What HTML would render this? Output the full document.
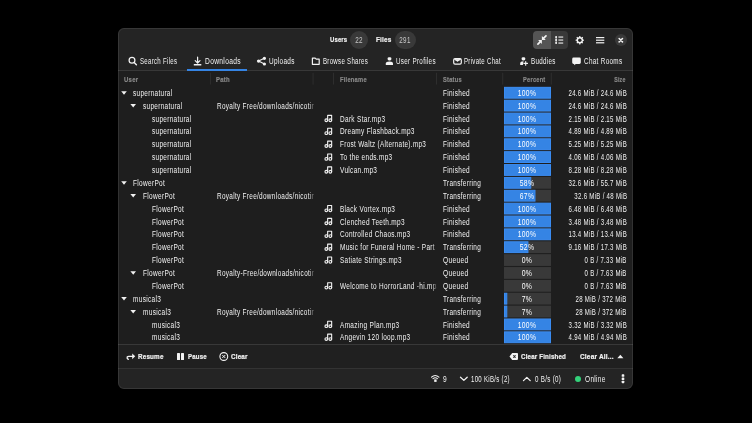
<!DOCTYPE html>
<html><head><meta charset="utf-8"><style>
html,body{margin:0;padding:0;width:752px;height:423px;overflow:hidden;background:#000;}
body{position:relative;font-family:"Liberation Sans",sans-serif;}
.win{position:absolute;left:118px;top:28px;width:515px;height:361px;border-radius:6px;background:#242424;}
.winb{position:absolute;left:118px;top:28px;width:513px;height:359px;border-radius:6px;border:1px solid rgba(255,255,255,0.09);}
.view{position:absolute;left:118px;top:71px;width:515px;height:273px;background:#1e1e1e;}
.abar{position:absolute;left:118px;top:345px;width:515px;height:23px;background:#202020;}
.hsep{position:absolute;left:118px;width:515px;height:1px;background:#383838;}
.t{position:absolute;white-space:nowrap;line-height:10px;}
.vs{position:absolute;top:73px;width:1px;height:12px;background:#2e2e2e;}
.bar{position:absolute;left:504px;width:47px;height:12px;background:#393939;overflow:hidden;}
.fill{position:absolute;left:0;top:0;height:12px;background:#3584e4;}
.badge{position:absolute;top:31px;height:18px;border-radius:9px;background:#393939;}
</style></head><body>
<div class="win"></div>
<div class="view"></div>
<div class="abar"></div>
<div class="hsep" style="top:70px"></div>
<div class="hsep" style="top:344px"></div>
<div class="hsep" style="top:368px;background:#333"></div>
<div class="winb"></div>
<div class="badge" style="left:350px;width:17.5px"></div>
<div class="badge" style="left:394.5px;width:21px"></div>
<div style="position:absolute;left:533.4px;top:31px;width:17.6px;height:18px;background:#555;border-radius:4px 0 0 4px"></div>
<div style="position:absolute;left:551px;top:31px;width:16.6px;height:18px;background:#393939;border-radius:0 4px 4px 0"></div>
<div style="position:absolute;left:614.6px;top:33.9px;width:12.4px;height:12.4px;background:#393939;border-radius:50%"></div>
<div style="position:absolute;left:187.2px;top:69px;width:59.7px;height:2px;background:#3584e4"></div>
<svg style="position:absolute;left:0;top:0" width="752" height="423"><rect x="210.1" y="72.8" width="1" height="11.8" fill="#2e2e2e"/><rect x="312.6" y="72.8" width="1" height="11.8" fill="#2e2e2e"/><rect x="333.0" y="72.8" width="1" height="11.8" fill="#2e2e2e"/><rect x="436.0" y="72.8" width="1" height="11.8" fill="#2e2e2e"/><rect x="502.2" y="72.8" width="1" height="11.8" fill="#2e2e2e"/><rect x="550.8" y="72.8" width="1" height="11.8" fill="#2e2e2e"/></svg>
<svg style="position:absolute;left:0;top:0" width="752" height="423"><rect x="504" y="86.85" width="47" height="11.8" fill="#393939"/><rect x="504.5" y="87.35" width="46.00" height="10.8" fill="#3584e4" stroke="#3a8cf2" stroke-width="1"/><rect x="504" y="99.72" width="47" height="11.8" fill="#393939"/><rect x="504.5" y="100.22" width="46.00" height="10.8" fill="#3584e4" stroke="#3a8cf2" stroke-width="1"/><rect x="504" y="112.59" width="47" height="11.8" fill="#393939"/><rect x="504.5" y="113.09" width="46.00" height="10.8" fill="#3584e4" stroke="#3a8cf2" stroke-width="1"/><rect x="504" y="125.46" width="47" height="11.8" fill="#393939"/><rect x="504.5" y="125.96" width="46.00" height="10.8" fill="#3584e4" stroke="#3a8cf2" stroke-width="1"/><rect x="504" y="138.33" width="47" height="11.8" fill="#393939"/><rect x="504.5" y="138.83" width="46.00" height="10.8" fill="#3584e4" stroke="#3a8cf2" stroke-width="1"/><rect x="504" y="151.20" width="47" height="11.8" fill="#393939"/><rect x="504.5" y="151.70" width="46.00" height="10.8" fill="#3584e4" stroke="#3a8cf2" stroke-width="1"/><rect x="504" y="164.07" width="47" height="11.8" fill="#393939"/><rect x="504.5" y="164.57" width="46.00" height="10.8" fill="#3584e4" stroke="#3a8cf2" stroke-width="1"/><rect x="504" y="176.94" width="47" height="11.8" fill="#393939"/><rect x="504.5" y="177.44" width="26.26" height="10.8" fill="#3584e4" stroke="#3a8cf2" stroke-width="1"/><rect x="504" y="189.81" width="47" height="11.8" fill="#393939"/><rect x="504.5" y="190.31" width="30.49" height="10.8" fill="#3584e4" stroke="#3a8cf2" stroke-width="1"/><rect x="504" y="202.68" width="47" height="11.8" fill="#393939"/><rect x="504.5" y="203.18" width="46.00" height="10.8" fill="#3584e4" stroke="#3a8cf2" stroke-width="1"/><rect x="504" y="215.55" width="47" height="11.8" fill="#393939"/><rect x="504.5" y="216.05" width="46.00" height="10.8" fill="#3584e4" stroke="#3a8cf2" stroke-width="1"/><rect x="504" y="228.42" width="47" height="11.8" fill="#393939"/><rect x="504.5" y="228.92" width="46.00" height="10.8" fill="#3584e4" stroke="#3a8cf2" stroke-width="1"/><rect x="504" y="241.29" width="47" height="11.8" fill="#393939"/><rect x="504.5" y="241.79" width="23.44" height="10.8" fill="#3584e4" stroke="#3a8cf2" stroke-width="1"/><rect x="504" y="254.16" width="47" height="11.8" fill="#393939"/><rect x="504" y="267.03" width="47" height="11.8" fill="#393939"/><rect x="504" y="279.90" width="47" height="11.8" fill="#393939"/><rect x="504" y="292.77" width="47" height="11.8" fill="#393939"/><rect x="504.5" y="293.27" width="2.29" height="10.8" fill="#3584e4" stroke="#3a8cf2" stroke-width="1"/><rect x="504" y="305.64" width="47" height="11.8" fill="#393939"/><rect x="504.5" y="306.14" width="2.29" height="10.8" fill="#3584e4" stroke="#3a8cf2" stroke-width="1"/><rect x="504" y="318.51" width="47" height="11.8" fill="#393939"/><rect x="504.5" y="319.01" width="46.00" height="10.8" fill="#3584e4" stroke="#3a8cf2" stroke-width="1"/><rect x="504" y="331.38" width="47" height="11.8" fill="#393939"/><rect x="504.5" y="331.88" width="46.00" height="10.8" fill="#3584e4" stroke="#3a8cf2" stroke-width="1"/></svg>
<div style="position:absolute;left:575.4px;top:376px;width:6px;height:6px;border-radius:50%;background:#33d17a"></div>
<svg style="position:absolute;left:0;top:0" width="752" height="423"><circle cx="132" cy="60.3" r="2.9" fill="none" stroke="#f2f2f2" stroke-width="1.25" stroke-linecap="round" stroke-linejoin="round"/><path d="M134.2 62.5L136.4 64.8" fill="none" stroke="#f2f2f2" stroke-width="1.4" stroke-linecap="round" stroke-linejoin="round"/><path d="M197.6 57.2V62.6M195.2 60.6L197.6 63L200 60.6" fill="none" stroke="#f2f2f2" stroke-width="1.2" stroke-linecap="round" stroke-linejoin="round"/><rect x="193.8" y="64" width="7.5" height="1.5" fill="#f2f2f2"/><g fill="#f2f2f2"><circle cx="258.6" cy="61.1" r="1.7"/><circle cx="264.4" cy="58.3" r="1.6"/><circle cx="264.4" cy="64" r="1.6"/></g><path d="M258.6 61.1L264.4 58.3M258.6 61.1L264.4 64" fill="none" stroke="#f2f2f2" stroke-width="1.1" stroke-linecap="round" stroke-linejoin="round"/><path d="M312.4 58.2H315.2L316.2 59.2H319.2V64.3H312.4Z" fill="none" stroke="#f2f2f2" stroke-width="1.2" stroke-linecap="round" stroke-linejoin="round"/><g fill="#f2f2f2"><rect x="387.6" y="57.2" width="3.8" height="3.3" rx="1.4"/><path d="M385.8 64.9V63.6Q385.8 61.4 389.5 61.4Q393 61.4 393 63.6V64.9Z"/></g><rect x="453.7" y="58.7" width="7.6" height="5.4" rx="1.3" fill="none" stroke="#f2f2f2" stroke-width="1.2" stroke-linecap="round" stroke-linejoin="round"/><path d="M454.6 59.4L457.5 61.3L460.4 59.4V59Z" fill="#f2f2f2" stroke="#f2f2f2" stroke-width="1"/><g fill="#f2f2f2"><rect x="521.6" y="57.2" width="3.7" height="3.2" rx="1.4"/><path d="M520.2 65V63.4Q520.2 61.4 523.5 61.3L522.9 65Z"/></g><path d="M525.7 61.6V65.2M523.9 63.4H527.5" fill="none" stroke="#f2f2f2" stroke-width="1.1" stroke-linecap="round" stroke-linejoin="round"/><path d="M573.6 57.6H579.4Q580.8 57.6 580.8 59V62.5Q580.8 63.9 579.4 63.9H575.8L574.2 65.2V63.9H573.6Q572.2 63.9 572.2 62.5V59Q572.2 57.6 573.6 57.6Z" fill="#f2f2f2"/><path d="M541.9 36.1V39.9H545.7Z" fill="#f2f2f2"/><path d="M543.4 38.4L546 35.8" fill="none" stroke="#f2f2f2" stroke-width="1.7" stroke-linecap="round" stroke-linejoin="round"/><path d="M538.1 40.1H541.9V43.9Z" fill="#f2f2f2"/><path d="M540.4 41.6L537.9 44.1" fill="none" stroke="#f2f2f2" stroke-width="1.7" stroke-linecap="round" stroke-linejoin="round"/><g fill="#f2f2f2"><circle cx="556.1" cy="37.1" r="1.0"/><circle cx="556.1" cy="40.1" r="1.0"/><circle cx="556.1" cy="43.1" r="1.0"/><rect x="555.7" y="37" width="0.8" height="6"/><rect x="558.4" y="36.5" width="4.8" height="1.1"/><rect x="558.4" y="39.5" width="4.8" height="1.1"/><rect x="558.4" y="42.5" width="4.8" height="1.1"/></g><path d="M583.03 39.54L584.01 39.65L584.01 40.75L583.03 40.86L582.85 41.46L582.55 42.02L583.17 42.79L582.39 43.57L581.62 42.95L581.06 43.25L580.46 43.43L580.35 44.41L579.25 44.41L579.14 43.43L578.54 43.25L577.98 42.95L577.21 43.57L576.43 42.79L577.05 42.02L576.75 41.46L576.57 40.86L575.59 40.75L575.59 39.65L576.57 39.54L576.75 38.94L577.05 38.38L576.43 37.61L577.21 36.83L577.98 37.45L578.54 37.15L579.14 36.97L579.25 35.99L580.35 35.99L580.46 36.97L581.06 37.15L581.62 37.45L582.39 36.83L583.17 37.61L582.55 38.38L582.85 38.94Z" fill="#f2f2f2"/><circle cx="579.8" cy="40.2" r="1.75" fill="#242424"/><g fill="#f2f2f2"><rect x="596" y="37" width="8.3" height="1.2"/><rect x="596" y="39.6" width="8.3" height="1.2"/><rect x="596" y="42.2" width="8.3" height="1.2"/></g><path d="M619.1 38.5L622.5 41.9M622.5 38.5L619.1 41.9" fill="none" stroke="#f2f2f2" stroke-width="1.5" stroke-linecap="round" stroke-linejoin="round"/><path d="M128.3 359.4Q126.6 358.2 127.2 357Q127.7 356.3 128.8 356.3H133" fill="none" stroke="#f2f2f2" stroke-width="1.3" stroke-linecap="round" stroke-linejoin="round"/><path d="M132.2 353.4L135.2 356.3L132.2 359.2Z" fill="#f2f2f2"/><g fill="#f2f2f2"><rect x="177" y="353" width="3" height="7" rx="0.5"/><rect x="181" y="353" width="3" height="7" rx="0.5"/></g><circle cx="223.8" cy="356.5" r="3.9" fill="none" stroke="#f2f2f2" stroke-width="1.1" stroke-linecap="round" stroke-linejoin="round"/><path d="M222.6 355.3L225 357.7M225 355.3L222.6 357.7" fill="none" stroke="#f2f2f2" stroke-width="1" stroke-linecap="round" stroke-linejoin="round"/><path d="M512.2 353H517.2Q518 353 518 353.8V359.1Q518 359.9 517.2 359.9H512.2L509.5 356.45Z" fill="#f2f2f2"/><path d="M513.3 355.3L515.6 357.6M515.6 355.3L513.3 357.6" stroke="#202020" stroke-width="1.1"/><path d="M617.3 358.2L620.35 354.8L623.4 358.2Z" fill="#f2f2f2"/><path d="M431.5 377.2Q435.2 373.8 438.9 377.2M433 378.7Q435.2 376.8 437.4 378.7" fill="none" stroke="#f2f2f2" stroke-width="1.1" stroke-linecap="round" stroke-linejoin="round"/><rect x="434.2" y="379.4" width="2.4" height="2.5" fill="#f2f2f2"/><path d="M460.5 377.2L463.85 380.4L467.2 377.2" fill="none" stroke="#f2f2f2" stroke-width="1.3" stroke-linecap="round" stroke-linejoin="round"/><path d="M523.5 380.6L526.85 377.4L530.2 380.6" fill="none" stroke="#f2f2f2" stroke-width="1.3" stroke-linecap="round" stroke-linejoin="round"/><g fill="#f2f2f2"><rect x="621.7" y="374.3" width="2.6" height="2.5" rx="0.6"/><rect x="621.7" y="377.5" width="2.6" height="2.5" rx="0.6"/><rect x="621.7" y="380.7" width="2.6" height="2.5" rx="0.6"/></g><path d="M121.2 91.13000000000001H126.8L124.0 94.63000000000001Z" fill="#f2f2f2"/><path d="M130.4 104.01H136.0L133.20000000000002 107.51Z" fill="#f2f2f2"/><g fill="none" stroke="#f2f2f2" stroke-width="1.1" stroke-linecap="round" stroke-linejoin="round"><circle cx="326.3" cy="120.27" r="1.35"/><circle cx="330.3" cy="120.27" r="1.35"/><path d="M327.65 120.37V115.37H331.65V120.37"/></g><g fill="none" stroke="#f2f2f2" stroke-width="1.1" stroke-linecap="round" stroke-linejoin="round"><circle cx="326.3" cy="133.14000000000001" r="1.35"/><circle cx="330.3" cy="133.14000000000001" r="1.35"/><path d="M327.65 133.24V128.24H331.65V133.24"/></g><g fill="none" stroke="#f2f2f2" stroke-width="1.1" stroke-linecap="round" stroke-linejoin="round"><circle cx="326.3" cy="146.02" r="1.35"/><circle cx="330.3" cy="146.02" r="1.35"/><path d="M327.65 146.12V141.12H331.65V146.12"/></g><g fill="none" stroke="#f2f2f2" stroke-width="1.1" stroke-linecap="round" stroke-linejoin="round"><circle cx="326.3" cy="158.88000000000002" r="1.35"/><circle cx="330.3" cy="158.88000000000002" r="1.35"/><path d="M327.65 158.98000000000002V153.98000000000002H331.65V158.98000000000002"/></g><g fill="none" stroke="#f2f2f2" stroke-width="1.1" stroke-linecap="round" stroke-linejoin="round"><circle cx="326.3" cy="171.75" r="1.35"/><circle cx="330.3" cy="171.75" r="1.35"/><path d="M327.65 171.85V166.85H331.65V171.85"/></g><path d="M121.2 181.22H126.8L124.0 184.72Z" fill="#f2f2f2"/><path d="M130.4 194.09H136.0L133.20000000000002 197.59Z" fill="#f2f2f2"/><g fill="none" stroke="#f2f2f2" stroke-width="1.1" stroke-linecap="round" stroke-linejoin="round"><circle cx="326.3" cy="210.36" r="1.35"/><circle cx="330.3" cy="210.36" r="1.35"/><path d="M327.65 210.46V205.46H331.65V210.46"/></g><g fill="none" stroke="#f2f2f2" stroke-width="1.1" stroke-linecap="round" stroke-linejoin="round"><circle cx="326.3" cy="223.24" r="1.35"/><circle cx="330.3" cy="223.24" r="1.35"/><path d="M327.65 223.34V218.34H331.65V223.34"/></g><g fill="none" stroke="#f2f2f2" stroke-width="1.1" stroke-linecap="round" stroke-linejoin="round"><circle cx="326.3" cy="236.11" r="1.35"/><circle cx="330.3" cy="236.11" r="1.35"/><path d="M327.65 236.21V231.21H331.65V236.21"/></g><g fill="none" stroke="#f2f2f2" stroke-width="1.1" stroke-linecap="round" stroke-linejoin="round"><circle cx="326.3" cy="248.98000000000002" r="1.35"/><circle cx="330.3" cy="248.98000000000002" r="1.35"/><path d="M327.65 249.08V244.08H331.65V249.08"/></g><g fill="none" stroke="#f2f2f2" stroke-width="1.1" stroke-linecap="round" stroke-linejoin="round"><circle cx="326.3" cy="261.85" r="1.35"/><circle cx="330.3" cy="261.85" r="1.35"/><path d="M327.65 261.95V256.95H331.65V261.95"/></g><path d="M130.4 271.31H136.0L133.20000000000002 274.81Z" fill="#f2f2f2"/><g fill="none" stroke="#f2f2f2" stroke-width="1.1" stroke-linecap="round" stroke-linejoin="round"><circle cx="326.3" cy="287.58" r="1.35"/><circle cx="330.3" cy="287.58" r="1.35"/><path d="M327.65 287.67999999999995V282.67999999999995H331.65V287.67999999999995"/></g><path d="M121.2 297.04999999999995H126.8L124.0 300.54999999999995Z" fill="#f2f2f2"/><path d="M130.4 309.91999999999996H136.0L133.20000000000002 313.41999999999996Z" fill="#f2f2f2"/><g fill="none" stroke="#f2f2f2" stroke-width="1.1" stroke-linecap="round" stroke-linejoin="round"><circle cx="326.3" cy="326.19" r="1.35"/><circle cx="330.3" cy="326.19" r="1.35"/><path d="M327.65 326.28999999999996V321.28999999999996H331.65V326.28999999999996"/></g><g fill="none" stroke="#f2f2f2" stroke-width="1.1" stroke-linecap="round" stroke-linejoin="round"><circle cx="326.3" cy="339.06" r="1.35"/><circle cx="330.3" cy="339.06" r="1.35"/><path d="M327.65 339.15999999999997V334.15999999999997H331.65V339.15999999999997"/></g></svg>
<div style="position:absolute;left:0;top:0;width:752px;height:423px;will-change:transform">
<div class="t" style="font-size:8.0px;color:#f2f2f2;letter-spacing:0.2px;font-weight:bold;-webkit-text-stroke:0.2px currentColor;left:329.5px;top:40.00px;transform-origin:0 0;transform:translateY(-4.9439999999999955px) scaleX(0.7419);">Users</div>
<div class="t" style="font-size:8.0px;color:#f2f2f2;letter-spacing:0.2px;font-weight:bold;-webkit-text-stroke:0.2px currentColor;left:376px;top:40.00px;transform-origin:0 0;transform:translateY(-4.9439999999999955px) scaleX(0.8018);">Files</div>
<div class="t" style="font-size:8.3px;color:#c8c8c8;letter-spacing:0.4px;left:258.7px;width:200px;text-align:center;top:40.00px;transform-origin:50% 0;transform:translateY(-5.343149999999994px) scaleX(0.7634);">22</div>
<div class="t" style="font-size:8.3px;color:#c8c8c8;letter-spacing:0.4px;left:305.0px;width:200px;text-align:center;top:40.00px;transform-origin:50% 0;transform:translateY(-5.343149999999994px) scaleX(0.7529);">291</div>
<div class="t" style="font-size:8.3px;color:#f2f2f2;letter-spacing:0.4px;left:139.6px;top:61.40px;transform-origin:0 0;transform:translateY(-4.543150000000004px) scaleX(0.7327);">Search Files</div>
<div class="t" style="font-size:8.3px;color:#f2f2f2;letter-spacing:0.4px;left:204.5px;top:61.40px;transform-origin:0 0;transform:translateY(-4.543150000000004px) scaleX(0.8050);">Downloads</div>
<div class="t" style="font-size:8.3px;color:#f2f2f2;letter-spacing:0.4px;left:268.7px;top:61.40px;transform-origin:0 0;transform:translateY(-4.543150000000004px) scaleX(0.7739);">Uploads</div>
<div class="t" style="font-size:8.3px;color:#f2f2f2;letter-spacing:0.4px;left:323px;top:61.40px;transform-origin:0 0;transform:translateY(-4.543150000000004px) scaleX(0.7339);">Browse Shares</div>
<div class="t" style="font-size:8.3px;color:#f2f2f2;letter-spacing:0.4px;left:396.4px;top:61.40px;transform-origin:0 0;transform:translateY(-4.543150000000004px) scaleX(0.7557);">User Profiles</div>
<div class="t" style="font-size:8.3px;color:#f2f2f2;letter-spacing:0.4px;left:464.4px;top:61.40px;transform-origin:0 0;transform:translateY(-4.543150000000004px) scaleX(0.7330);">Private Chat</div>
<div class="t" style="font-size:8.3px;color:#f2f2f2;letter-spacing:0.4px;left:530.6px;top:61.40px;transform-origin:0 0;transform:translateY(-4.543150000000004px) scaleX(0.7507);">Buddies</div>
<div class="t" style="font-size:8.3px;color:#f2f2f2;letter-spacing:0.4px;left:583.8px;top:61.40px;transform-origin:0 0;transform:translateY(-4.543150000000004px) scaleX(0.7667);">Chat Rooms</div>
<div class="t" style="font-size:7.2px;color:#888888;letter-spacing:0.3px;font-weight:bold;-webkit-text-stroke:0.2px currentColor;left:124px;top:79.20px;transform-origin:0 0;transform:translateY(-4.1795999999999935px) scaleX(0.8311);">User</div>
<div class="t" style="font-size:7.2px;color:#888888;letter-spacing:0.3px;font-weight:bold;-webkit-text-stroke:0.2px currentColor;left:216.3px;top:79.20px;transform-origin:0 0;transform:translateY(-4.1795999999999935px) scaleX(0.8269);">Path</div>
<div class="t" style="font-size:7.2px;color:#888888;letter-spacing:0.3px;font-weight:bold;-webkit-text-stroke:0.2px currentColor;left:339.8px;top:79.20px;transform-origin:0 0;transform:translateY(-4.1795999999999935px) scaleX(0.7998);">Filename</div>
<div class="t" style="font-size:7.2px;color:#888888;letter-spacing:0.3px;font-weight:bold;-webkit-text-stroke:0.2px currentColor;left:442.5px;top:79.20px;transform-origin:0 0;transform:translateY(-4.1795999999999935px) scaleX(0.7925);">Status</div>
<div class="t" style="font-size:7.2px;color:#888888;letter-spacing:0.3px;font-weight:bold;-webkit-text-stroke:0.2px currentColor;right:206.5px;top:79.20px;transform-origin:100% 0;transform:translateY(-4.1795999999999935px) scaleX(0.7854);">Percent</div>
<div class="t" style="font-size:7.2px;color:#888888;letter-spacing:0.3px;font-weight:bold;-webkit-text-stroke:0.2px currentColor;right:126.20000000000005px;top:79.20px;transform-origin:100% 0;transform:translateY(-4.1795999999999935px) scaleX(0.7328);">Size</div>
<div class="t" style="font-size:8.3px;color:#f2f2f2;letter-spacing:0.4px;left:133.2px;top:92.73px;transform-origin:0 0;transform:translateY(-4.543149999999997px) scaleX(0.7757);">supernatural</div>
<div class="t" style="font-size:8.3px;color:#f2f2f2;letter-spacing:0.4px;left:442.6px;top:92.73px;transform-origin:0 0;transform:translateY(-4.543149999999997px) scaleX(0.7806);">Finished</div>
<div class="t" style="font-size:8.3px;color:#ffffff;letter-spacing:0.4px;left:427.4px;width:200px;text-align:center;top:92.73px;transform-origin:50% 0;transform:translateY(-4.543149999999997px) scaleX(0.8120);">100%</div>
<div class="t" style="font-size:8.3px;color:#f2f2f2;letter-spacing:0.4px;right:125.20000000000005px;top:92.73px;transform-origin:100% 0;transform:translateY(-4.543149999999997px) scaleX(0.7313);">24.6 MiB / 24.6 MiB</div>
<div class="t" style="font-size:8.3px;color:#f2f2f2;letter-spacing:0.4px;left:142.5px;top:105.61px;transform-origin:0 0;transform:translateY(-4.543149999999997px) scaleX(0.7757);">supernatural</div>
<div class="t" style="font-size:8.3px;color:#f2f2f2;letter-spacing:0.4px;left:216.6px;top:105.61px;transform-origin:0 0;transform:translateY(-4.543149999999997px) scaleX(0.7724);width:125.6px;overflow:hidden;-webkit-mask-image:linear-gradient(to right,#000 94.8%,rgba(0,0,0,0.15) 100%);">Royalty Free/downloads/nicotine</div>
<div class="t" style="font-size:8.3px;color:#f2f2f2;letter-spacing:0.4px;left:442.6px;top:105.61px;transform-origin:0 0;transform:translateY(-4.543149999999997px) scaleX(0.7806);">Finished</div>
<div class="t" style="font-size:8.3px;color:#ffffff;letter-spacing:0.4px;left:427.4px;width:200px;text-align:center;top:105.61px;transform-origin:50% 0;transform:translateY(-4.543149999999997px) scaleX(0.8120);">100%</div>
<div class="t" style="font-size:8.3px;color:#f2f2f2;letter-spacing:0.4px;right:125.20000000000005px;top:105.61px;transform-origin:100% 0;transform:translateY(-4.543149999999997px) scaleX(0.7313);">24.6 MiB / 24.6 MiB</div>
<div class="t" style="font-size:8.3px;color:#f2f2f2;letter-spacing:0.4px;left:151.79999999999998px;top:118.47px;transform-origin:0 0;transform:translateY(-3.543149999999997px) scaleX(0.7757);">supernatural</div>
<div class="t" style="font-size:8.3px;color:#f2f2f2;letter-spacing:0.4px;left:339.9px;top:118.47px;transform-origin:0 0;transform:translateY(-3.543149999999997px) scaleX(0.7794);width:124.5px;overflow:hidden;-webkit-mask-image:linear-gradient(to right,#000 94.8%,rgba(0,0,0,0.15) 100%);">Dark Star.mp3</div>
<div class="t" style="font-size:8.3px;color:#f2f2f2;letter-spacing:0.4px;left:442.6px;top:118.47px;transform-origin:0 0;transform:translateY(-3.543149999999997px) scaleX(0.7806);">Finished</div>
<div class="t" style="font-size:8.3px;color:#ffffff;letter-spacing:0.4px;left:427.4px;width:200px;text-align:center;top:118.47px;transform-origin:50% 0;transform:translateY(-3.543149999999997px) scaleX(0.8120);">100%</div>
<div class="t" style="font-size:8.3px;color:#f2f2f2;letter-spacing:0.4px;right:125.20000000000005px;top:118.47px;transform-origin:100% 0;transform:translateY(-3.543149999999997px) scaleX(0.7313);">2.15 MiB / 2.15 MiB</div>
<div class="t" style="font-size:8.3px;color:#f2f2f2;letter-spacing:0.4px;left:151.79999999999998px;top:131.34px;transform-origin:0 0;transform:translateY(-4.543150000000011px) scaleX(0.7757);">supernatural</div>
<div class="t" style="font-size:8.3px;color:#f2f2f2;letter-spacing:0.4px;left:339.9px;top:131.34px;transform-origin:0 0;transform:translateY(-4.543150000000011px) scaleX(0.7819);width:124.1px;overflow:hidden;-webkit-mask-image:linear-gradient(to right,#000 94.8%,rgba(0,0,0,0.15) 100%);">Dreamy Flashback.mp3</div>
<div class="t" style="font-size:8.3px;color:#f2f2f2;letter-spacing:0.4px;left:442.6px;top:131.34px;transform-origin:0 0;transform:translateY(-4.543150000000011px) scaleX(0.7806);">Finished</div>
<div class="t" style="font-size:8.3px;color:#ffffff;letter-spacing:0.4px;left:427.4px;width:200px;text-align:center;top:131.34px;transform-origin:50% 0;transform:translateY(-4.543150000000011px) scaleX(0.8120);">100%</div>
<div class="t" style="font-size:8.3px;color:#f2f2f2;letter-spacing:0.4px;right:125.20000000000005px;top:131.34px;transform-origin:100% 0;transform:translateY(-4.543150000000011px) scaleX(0.7313);">4.89 MiB / 4.89 MiB</div>
<div class="t" style="font-size:8.3px;color:#f2f2f2;letter-spacing:0.4px;left:151.79999999999998px;top:144.22px;transform-origin:0 0;transform:translateY(-4.543149999999997px) scaleX(0.7757);">supernatural</div>
<div class="t" style="font-size:8.3px;color:#f2f2f2;letter-spacing:0.4px;left:339.9px;top:144.22px;transform-origin:0 0;transform:translateY(-4.543149999999997px) scaleX(0.7705);width:125.9px;overflow:hidden;-webkit-mask-image:linear-gradient(to right,#000 94.8%,rgba(0,0,0,0.15) 100%);">Frost Waltz (Alternate).mp3</div>
<div class="t" style="font-size:8.3px;color:#f2f2f2;letter-spacing:0.4px;left:442.6px;top:144.22px;transform-origin:0 0;transform:translateY(-4.543149999999997px) scaleX(0.7806);">Finished</div>
<div class="t" style="font-size:8.3px;color:#ffffff;letter-spacing:0.4px;left:427.4px;width:200px;text-align:center;top:144.22px;transform-origin:50% 0;transform:translateY(-4.543149999999997px) scaleX(0.8120);">100%</div>
<div class="t" style="font-size:8.3px;color:#f2f2f2;letter-spacing:0.4px;right:125.20000000000005px;top:144.22px;transform-origin:100% 0;transform:translateY(-4.543149999999997px) scaleX(0.7313);">5.25 MiB / 5.25 MiB</div>
<div class="t" style="font-size:8.3px;color:#f2f2f2;letter-spacing:0.4px;left:151.79999999999998px;top:157.08px;transform-origin:0 0;transform:translateY(-4.543150000000026px) scaleX(0.7757);">supernatural</div>
<div class="t" style="font-size:8.3px;color:#f2f2f2;letter-spacing:0.4px;left:339.9px;top:157.08px;transform-origin:0 0;transform:translateY(-4.543150000000026px) scaleX(0.7787);width:124.6px;overflow:hidden;-webkit-mask-image:linear-gradient(to right,#000 94.8%,rgba(0,0,0,0.15) 100%);">To the ends.mp3</div>
<div class="t" style="font-size:8.3px;color:#f2f2f2;letter-spacing:0.4px;left:442.6px;top:157.08px;transform-origin:0 0;transform:translateY(-4.543150000000026px) scaleX(0.7806);">Finished</div>
<div class="t" style="font-size:8.3px;color:#ffffff;letter-spacing:0.4px;left:427.4px;width:200px;text-align:center;top:157.08px;transform-origin:50% 0;transform:translateY(-4.543150000000026px) scaleX(0.8120);">100%</div>
<div class="t" style="font-size:8.3px;color:#f2f2f2;letter-spacing:0.4px;right:125.20000000000005px;top:157.08px;transform-origin:100% 0;transform:translateY(-4.543150000000026px) scaleX(0.7313);">4.06 MiB / 4.06 MiB</div>
<div class="t" style="font-size:8.3px;color:#f2f2f2;letter-spacing:0.4px;left:151.79999999999998px;top:169.95px;transform-origin:0 0;transform:translateY(-4.543150000000026px) scaleX(0.7757);">supernatural</div>
<div class="t" style="font-size:8.3px;color:#f2f2f2;letter-spacing:0.4px;left:339.9px;top:169.95px;transform-origin:0 0;transform:translateY(-4.543150000000026px) scaleX(0.7850);width:123.6px;overflow:hidden;-webkit-mask-image:linear-gradient(to right,#000 94.8%,rgba(0,0,0,0.15) 100%);">Vulcan.mp3</div>
<div class="t" style="font-size:8.3px;color:#f2f2f2;letter-spacing:0.4px;left:442.6px;top:169.95px;transform-origin:0 0;transform:translateY(-4.543150000000026px) scaleX(0.7806);">Finished</div>
<div class="t" style="font-size:8.3px;color:#ffffff;letter-spacing:0.4px;left:427.4px;width:200px;text-align:center;top:169.95px;transform-origin:50% 0;transform:translateY(-4.543150000000026px) scaleX(0.8120);">100%</div>
<div class="t" style="font-size:8.3px;color:#f2f2f2;letter-spacing:0.4px;right:125.20000000000005px;top:169.95px;transform-origin:100% 0;transform:translateY(-4.543150000000026px) scaleX(0.7313);">8.28 MiB / 8.28 MiB</div>
<div class="t" style="font-size:8.3px;color:#f2f2f2;letter-spacing:0.4px;left:133.2px;top:182.82px;transform-origin:0 0;transform:translateY(-4.543150000000026px) scaleX(0.7835);">FlowerPot</div>
<div class="t" style="font-size:8.3px;color:#f2f2f2;letter-spacing:0.4px;left:442.6px;top:182.82px;transform-origin:0 0;transform:translateY(-4.543150000000026px) scaleX(0.7734);">Transferring</div>
<div class="t" style="font-size:8.3px;color:#ffffff;letter-spacing:0.4px;left:427.4px;width:200px;text-align:center;top:182.82px;transform-origin:50% 0;transform:translateY(-4.543150000000026px) scaleX(0.8186);">58%</div>
<div class="t" style="font-size:8.3px;color:#f2f2f2;letter-spacing:0.4px;right:125.20000000000005px;top:182.82px;transform-origin:100% 0;transform:translateY(-4.543150000000026px) scaleX(0.7313);">32.6 MiB / 55.7 MiB</div>
<div class="t" style="font-size:8.3px;color:#f2f2f2;letter-spacing:0.4px;left:142.5px;top:195.69px;transform-origin:0 0;transform:translateY(-4.543150000000026px) scaleX(0.7835);">FlowerPot</div>
<div class="t" style="font-size:8.3px;color:#f2f2f2;letter-spacing:0.4px;left:216.6px;top:195.69px;transform-origin:0 0;transform:translateY(-4.543150000000026px) scaleX(0.7724);width:125.6px;overflow:hidden;-webkit-mask-image:linear-gradient(to right,#000 94.8%,rgba(0,0,0,0.15) 100%);">Royalty Free/downloads/nicotine</div>
<div class="t" style="font-size:8.3px;color:#f2f2f2;letter-spacing:0.4px;left:442.6px;top:195.69px;transform-origin:0 0;transform:translateY(-4.543150000000026px) scaleX(0.7734);">Transferring</div>
<div class="t" style="font-size:8.3px;color:#ffffff;letter-spacing:0.4px;left:427.4px;width:200px;text-align:center;top:195.69px;transform-origin:50% 0;transform:translateY(-4.543150000000026px) scaleX(0.8186);">67%</div>
<div class="t" style="font-size:8.3px;color:#f2f2f2;letter-spacing:0.4px;right:125.20000000000005px;top:195.69px;transform-origin:100% 0;transform:translateY(-4.543150000000026px) scaleX(0.7325);">32.6 MiB / 48 MiB</div>
<div class="t" style="font-size:8.3px;color:#f2f2f2;letter-spacing:0.4px;left:151.79999999999998px;top:208.56px;transform-origin:0 0;transform:translateY(-4.543150000000026px) scaleX(0.7835);">FlowerPot</div>
<div class="t" style="font-size:8.3px;color:#f2f2f2;letter-spacing:0.4px;left:339.9px;top:208.56px;transform-origin:0 0;transform:translateY(-4.543150000000026px) scaleX(0.7776);width:124.7px;overflow:hidden;-webkit-mask-image:linear-gradient(to right,#000 94.8%,rgba(0,0,0,0.15) 100%);">Black Vortex.mp3</div>
<div class="t" style="font-size:8.3px;color:#f2f2f2;letter-spacing:0.4px;left:442.6px;top:208.56px;transform-origin:0 0;transform:translateY(-4.543150000000026px) scaleX(0.7806);">Finished</div>
<div class="t" style="font-size:8.3px;color:#ffffff;letter-spacing:0.4px;left:427.4px;width:200px;text-align:center;top:208.56px;transform-origin:50% 0;transform:translateY(-4.543150000000026px) scaleX(0.8120);">100%</div>
<div class="t" style="font-size:8.3px;color:#f2f2f2;letter-spacing:0.4px;right:125.20000000000005px;top:208.56px;transform-origin:100% 0;transform:translateY(-4.543150000000026px) scaleX(0.7313);">6.48 MiB / 6.48 MiB</div>
<div class="t" style="font-size:8.3px;color:#f2f2f2;letter-spacing:0.4px;left:151.79999999999998px;top:221.44px;transform-origin:0 0;transform:translateY(-3.5431500000000256px) scaleX(0.7835);">FlowerPot</div>
<div class="t" style="font-size:8.3px;color:#f2f2f2;letter-spacing:0.4px;left:339.9px;top:221.44px;transform-origin:0 0;transform:translateY(-3.5431500000000256px) scaleX(0.7800);width:124.4px;overflow:hidden;-webkit-mask-image:linear-gradient(to right,#000 94.8%,rgba(0,0,0,0.15) 100%);">Clenched Teeth.mp3</div>
<div class="t" style="font-size:8.3px;color:#f2f2f2;letter-spacing:0.4px;left:442.6px;top:221.44px;transform-origin:0 0;transform:translateY(-3.5431500000000256px) scaleX(0.7806);">Finished</div>
<div class="t" style="font-size:8.3px;color:#ffffff;letter-spacing:0.4px;left:427.4px;width:200px;text-align:center;top:221.44px;transform-origin:50% 0;transform:translateY(-3.5431500000000256px) scaleX(0.8120);">100%</div>
<div class="t" style="font-size:8.3px;color:#f2f2f2;letter-spacing:0.4px;right:125.20000000000005px;top:221.44px;transform-origin:100% 0;transform:translateY(-3.5431500000000256px) scaleX(0.7313);">3.48 MiB / 3.48 MiB</div>
<div class="t" style="font-size:8.3px;color:#f2f2f2;letter-spacing:0.4px;left:151.79999999999998px;top:234.31px;transform-origin:0 0;transform:translateY(-4.543150000000026px) scaleX(0.7835);">FlowerPot</div>
<div class="t" style="font-size:8.3px;color:#f2f2f2;letter-spacing:0.4px;left:339.9px;top:234.31px;transform-origin:0 0;transform:translateY(-4.543150000000026px) scaleX(0.7781);width:124.7px;overflow:hidden;-webkit-mask-image:linear-gradient(to right,#000 94.8%,rgba(0,0,0,0.15) 100%);">Controlled Chaos.mp3</div>
<div class="t" style="font-size:8.3px;color:#f2f2f2;letter-spacing:0.4px;left:442.6px;top:234.31px;transform-origin:0 0;transform:translateY(-4.543150000000026px) scaleX(0.7806);">Finished</div>
<div class="t" style="font-size:8.3px;color:#ffffff;letter-spacing:0.4px;left:427.4px;width:200px;text-align:center;top:234.31px;transform-origin:50% 0;transform:translateY(-4.543150000000026px) scaleX(0.8120);">100%</div>
<div class="t" style="font-size:8.3px;color:#f2f2f2;letter-spacing:0.4px;right:125.20000000000005px;top:234.31px;transform-origin:100% 0;transform:translateY(-4.543150000000026px) scaleX(0.7313);">13.4 MiB / 13.4 MiB</div>
<div class="t" style="font-size:8.3px;color:#f2f2f2;letter-spacing:0.4px;left:151.79999999999998px;top:247.18px;transform-origin:0 0;transform:translateY(-4.543150000000026px) scaleX(0.7835);">FlowerPot</div>
<div class="t" style="font-size:8.3px;color:#f2f2f2;letter-spacing:0.4px;left:339.9px;top:247.18px;transform-origin:0 0;transform:translateY(-4.543150000000026px) scaleX(0.7726);width:125.5px;overflow:hidden;-webkit-mask-image:linear-gradient(to right,#000 94.8%,rgba(0,0,0,0.15) 100%);">Music for Funeral Home - Part 1.mp3</div>
<div class="t" style="font-size:8.3px;color:#f2f2f2;letter-spacing:0.4px;left:442.6px;top:247.18px;transform-origin:0 0;transform:translateY(-4.543150000000026px) scaleX(0.7734);">Transferring</div>
<div class="t" style="font-size:8.3px;color:#ffffff;letter-spacing:0.4px;left:427.4px;width:200px;text-align:center;top:247.18px;transform-origin:50% 0;transform:translateY(-4.543150000000026px) scaleX(0.8186);">52%</div>
<div class="t" style="font-size:8.3px;color:#f2f2f2;letter-spacing:0.4px;right:125.20000000000005px;top:247.18px;transform-origin:100% 0;transform:translateY(-4.543150000000026px) scaleX(0.7313);">9.16 MiB / 17.3 MiB</div>
<div class="t" style="font-size:8.3px;color:#f2f2f2;letter-spacing:0.4px;left:151.79999999999998px;top:260.05px;transform-origin:0 0;transform:translateY(-4.543150000000026px) scaleX(0.7835);">FlowerPot</div>
<div class="t" style="font-size:8.3px;color:#f2f2f2;letter-spacing:0.4px;left:339.9px;top:260.05px;transform-origin:0 0;transform:translateY(-4.543150000000026px) scaleX(0.7729);width:125.5px;overflow:hidden;-webkit-mask-image:linear-gradient(to right,#000 94.8%,rgba(0,0,0,0.15) 100%);">Satiate Strings.mp3</div>
<div class="t" style="font-size:8.3px;color:#f2f2f2;letter-spacing:0.4px;left:442.6px;top:260.05px;transform-origin:0 0;transform:translateY(-4.543150000000026px) scaleX(0.7962);">Queued</div>
<div class="t" style="font-size:8.3px;color:#ffffff;letter-spacing:0.4px;left:427.4px;width:200px;text-align:center;top:260.05px;transform-origin:50% 0;transform:translateY(-4.543150000000026px) scaleX(0.8303);">0%</div>
<div class="t" style="font-size:8.3px;color:#f2f2f2;letter-spacing:0.4px;right:125.20000000000005px;top:260.05px;transform-origin:100% 0;transform:translateY(-4.543150000000026px) scaleX(0.7313);">0 B / 7.33 MiB</div>
<div class="t" style="font-size:8.3px;color:#f2f2f2;letter-spacing:0.4px;left:142.5px;top:272.91px;transform-origin:0 0;transform:translateY(-4.543150000000026px) scaleX(0.7835);">FlowerPot</div>
<div class="t" style="font-size:8.3px;color:#f2f2f2;letter-spacing:0.4px;left:216.6px;top:272.91px;transform-origin:0 0;transform:translateY(-4.543150000000026px) scaleX(0.7726);width:125.5px;overflow:hidden;-webkit-mask-image:linear-gradient(to right,#000 94.8%,rgba(0,0,0,0.15) 100%);">Royalty-Free/downloads/nicotine</div>
<div class="t" style="font-size:8.3px;color:#f2f2f2;letter-spacing:0.4px;left:442.6px;top:272.91px;transform-origin:0 0;transform:translateY(-4.543150000000026px) scaleX(0.7962);">Queued</div>
<div class="t" style="font-size:8.3px;color:#ffffff;letter-spacing:0.4px;left:427.4px;width:200px;text-align:center;top:272.91px;transform-origin:50% 0;transform:translateY(-4.543150000000026px) scaleX(0.8303);">0%</div>
<div class="t" style="font-size:8.3px;color:#f2f2f2;letter-spacing:0.4px;right:125.20000000000005px;top:272.91px;transform-origin:100% 0;transform:translateY(-4.543150000000026px) scaleX(0.7313);">0 B / 7.63 MiB</div>
<div class="t" style="font-size:8.3px;color:#f2f2f2;letter-spacing:0.4px;left:151.79999999999998px;top:285.78px;transform-origin:0 0;transform:translateY(-4.543150000000026px) scaleX(0.7835);">FlowerPot</div>
<div class="t" style="font-size:8.3px;color:#f2f2f2;letter-spacing:0.4px;left:339.9px;top:285.78px;transform-origin:0 0;transform:translateY(-4.543150000000026px) scaleX(0.7759);width:125.0px;overflow:hidden;-webkit-mask-image:linear-gradient(to right,#000 94.8%,rgba(0,0,0,0.15) 100%);">Welcome to HorrorLand -hi.mp3</div>
<div class="t" style="font-size:8.3px;color:#f2f2f2;letter-spacing:0.4px;left:442.6px;top:285.78px;transform-origin:0 0;transform:translateY(-4.543150000000026px) scaleX(0.7962);">Queued</div>
<div class="t" style="font-size:8.3px;color:#ffffff;letter-spacing:0.4px;left:427.4px;width:200px;text-align:center;top:285.78px;transform-origin:50% 0;transform:translateY(-4.543150000000026px) scaleX(0.8303);">0%</div>
<div class="t" style="font-size:8.3px;color:#f2f2f2;letter-spacing:0.4px;right:125.20000000000005px;top:285.78px;transform-origin:100% 0;transform:translateY(-4.543150000000026px) scaleX(0.7313);">0 B / 7.63 MiB</div>
<div class="t" style="font-size:8.3px;color:#f2f2f2;letter-spacing:0.4px;left:133.2px;top:298.65px;transform-origin:0 0;transform:translateY(-4.543150000000026px) scaleX(0.7832);">musical3</div>
<div class="t" style="font-size:8.3px;color:#f2f2f2;letter-spacing:0.4px;left:442.6px;top:298.65px;transform-origin:0 0;transform:translateY(-4.543150000000026px) scaleX(0.7734);">Transferring</div>
<div class="t" style="font-size:8.3px;color:#ffffff;letter-spacing:0.4px;left:427.4px;width:200px;text-align:center;top:298.65px;transform-origin:50% 0;transform:translateY(-4.543150000000026px) scaleX(0.8303);">7%</div>
<div class="t" style="font-size:8.3px;color:#f2f2f2;letter-spacing:0.4px;right:125.20000000000005px;top:298.65px;transform-origin:100% 0;transform:translateY(-4.543150000000026px) scaleX(0.7344);">28 MiB / 372 MiB</div>
<div class="t" style="font-size:8.3px;color:#f2f2f2;letter-spacing:0.4px;left:142.5px;top:311.52px;transform-origin:0 0;transform:translateY(-4.543150000000026px) scaleX(0.7832);">musical3</div>
<div class="t" style="font-size:8.3px;color:#f2f2f2;letter-spacing:0.4px;left:216.6px;top:311.52px;transform-origin:0 0;transform:translateY(-4.543150000000026px) scaleX(0.7724);width:125.6px;overflow:hidden;-webkit-mask-image:linear-gradient(to right,#000 94.8%,rgba(0,0,0,0.15) 100%);">Royalty Free/downloads/nicotine</div>
<div class="t" style="font-size:8.3px;color:#f2f2f2;letter-spacing:0.4px;left:442.6px;top:311.52px;transform-origin:0 0;transform:translateY(-4.543150000000026px) scaleX(0.7734);">Transferring</div>
<div class="t" style="font-size:8.3px;color:#ffffff;letter-spacing:0.4px;left:427.4px;width:200px;text-align:center;top:311.52px;transform-origin:50% 0;transform:translateY(-4.543150000000026px) scaleX(0.8303);">7%</div>
<div class="t" style="font-size:8.3px;color:#f2f2f2;letter-spacing:0.4px;right:125.20000000000005px;top:311.52px;transform-origin:100% 0;transform:translateY(-4.543150000000026px) scaleX(0.7344);">28 MiB / 372 MiB</div>
<div class="t" style="font-size:8.3px;color:#f2f2f2;letter-spacing:0.4px;left:151.79999999999998px;top:324.39px;transform-origin:0 0;transform:translateY(-3.5431500000000256px) scaleX(0.7832);">musical3</div>
<div class="t" style="font-size:8.3px;color:#f2f2f2;letter-spacing:0.4px;left:339.9px;top:324.39px;transform-origin:0 0;transform:translateY(-3.5431500000000256px) scaleX(0.7824);width:124.0px;overflow:hidden;-webkit-mask-image:linear-gradient(to right,#000 94.8%,rgba(0,0,0,0.15) 100%);">Amazing Plan.mp3</div>
<div class="t" style="font-size:8.3px;color:#f2f2f2;letter-spacing:0.4px;left:442.6px;top:324.39px;transform-origin:0 0;transform:translateY(-3.5431500000000256px) scaleX(0.7806);">Finished</div>
<div class="t" style="font-size:8.3px;color:#ffffff;letter-spacing:0.4px;left:427.4px;width:200px;text-align:center;top:324.39px;transform-origin:50% 0;transform:translateY(-3.5431500000000256px) scaleX(0.8120);">100%</div>
<div class="t" style="font-size:8.3px;color:#f2f2f2;letter-spacing:0.4px;right:125.20000000000005px;top:324.39px;transform-origin:100% 0;transform:translateY(-3.5431500000000256px) scaleX(0.7313);">3.32 MiB / 3.32 MiB</div>
<div class="t" style="font-size:8.3px;color:#f2f2f2;letter-spacing:0.4px;left:151.79999999999998px;top:337.26px;transform-origin:0 0;transform:translateY(-4.543150000000026px) scaleX(0.7832);">musical3</div>
<div class="t" style="font-size:8.3px;color:#f2f2f2;letter-spacing:0.4px;left:339.9px;top:337.26px;transform-origin:0 0;transform:translateY(-4.543150000000026px) scaleX(0.7781);width:124.7px;overflow:hidden;-webkit-mask-image:linear-gradient(to right,#000 94.8%,rgba(0,0,0,0.15) 100%);">Angevin 120 loop.mp3</div>
<div class="t" style="font-size:8.3px;color:#f2f2f2;letter-spacing:0.4px;left:442.6px;top:337.26px;transform-origin:0 0;transform:translateY(-4.543150000000026px) scaleX(0.7806);">Finished</div>
<div class="t" style="font-size:8.3px;color:#ffffff;letter-spacing:0.4px;left:427.4px;width:200px;text-align:center;top:337.26px;transform-origin:50% 0;transform:translateY(-4.543150000000026px) scaleX(0.8120);">100%</div>
<div class="t" style="font-size:8.3px;color:#f2f2f2;letter-spacing:0.4px;right:125.20000000000005px;top:337.26px;transform-origin:100% 0;transform:translateY(-4.543150000000026px) scaleX(0.7313);">4.94 MiB / 4.94 MiB</div>
<div class="t" style="font-size:7.4px;color:#f2f2f2;letter-spacing:0.2px;font-weight:bold;-webkit-text-stroke:0.2px currentColor;left:137.8px;top:356.80px;transform-origin:0 0;transform:translateY(-4.745699999999999px) scaleX(0.8535);">Resume</div>
<div class="t" style="font-size:7.4px;color:#f2f2f2;letter-spacing:0.2px;font-weight:bold;-webkit-text-stroke:0.2px currentColor;left:187.8px;top:356.80px;transform-origin:0 0;transform:translateY(-4.745699999999999px) scaleX(0.8235);">Pause</div>
<div class="t" style="font-size:7.4px;color:#f2f2f2;letter-spacing:0.2px;font-weight:bold;-webkit-text-stroke:0.2px currentColor;left:230.8px;top:356.80px;transform-origin:0 0;transform:translateY(-4.745699999999999px) scaleX(0.8552);">Clear</div>
<div class="t" style="font-size:7.4px;color:#f2f2f2;letter-spacing:0.2px;font-weight:bold;-webkit-text-stroke:0.2px currentColor;left:520.8px;top:356.80px;transform-origin:0 0;transform:translateY(-4.745699999999999px) scaleX(0.8387);">Clear Finished</div>
<div class="t" style="font-size:7.4px;color:#f2f2f2;letter-spacing:0.2px;font-weight:bold;-webkit-text-stroke:0.2px currentColor;left:579.6px;top:356.80px;transform-origin:0 0;transform:translateY(-4.745699999999999px) scaleX(0.8801);">Clear All...</div>
<div class="t" style="font-size:8.3px;color:#f2f2f2;letter-spacing:0.4px;left:442.5px;top:379.00px;transform-origin:0 0;transform:translateY(-4.943150000000003px) scaleX(0.8000);">9</div>
<div class="t" style="font-size:8.3px;color:#f2f2f2;letter-spacing:0.4px;left:471px;top:379.00px;transform-origin:0 0;transform:translateY(-4.943150000000003px) scaleX(0.7321);">100 KiB/s (2)</div>
<div class="t" style="font-size:8.3px;color:#f2f2f2;letter-spacing:0.4px;left:534.5px;top:379.00px;transform-origin:0 0;transform:translateY(-4.943150000000003px) scaleX(0.7474);">0 B/s (0)</div>
<div class="t" style="font-size:8.3px;color:#f2f2f2;letter-spacing:0.4px;left:585.2px;top:379.00px;transform-origin:0 0;transform:translateY(-4.943150000000003px) scaleX(0.7850);">Online</div>
</div>
</body></html>
